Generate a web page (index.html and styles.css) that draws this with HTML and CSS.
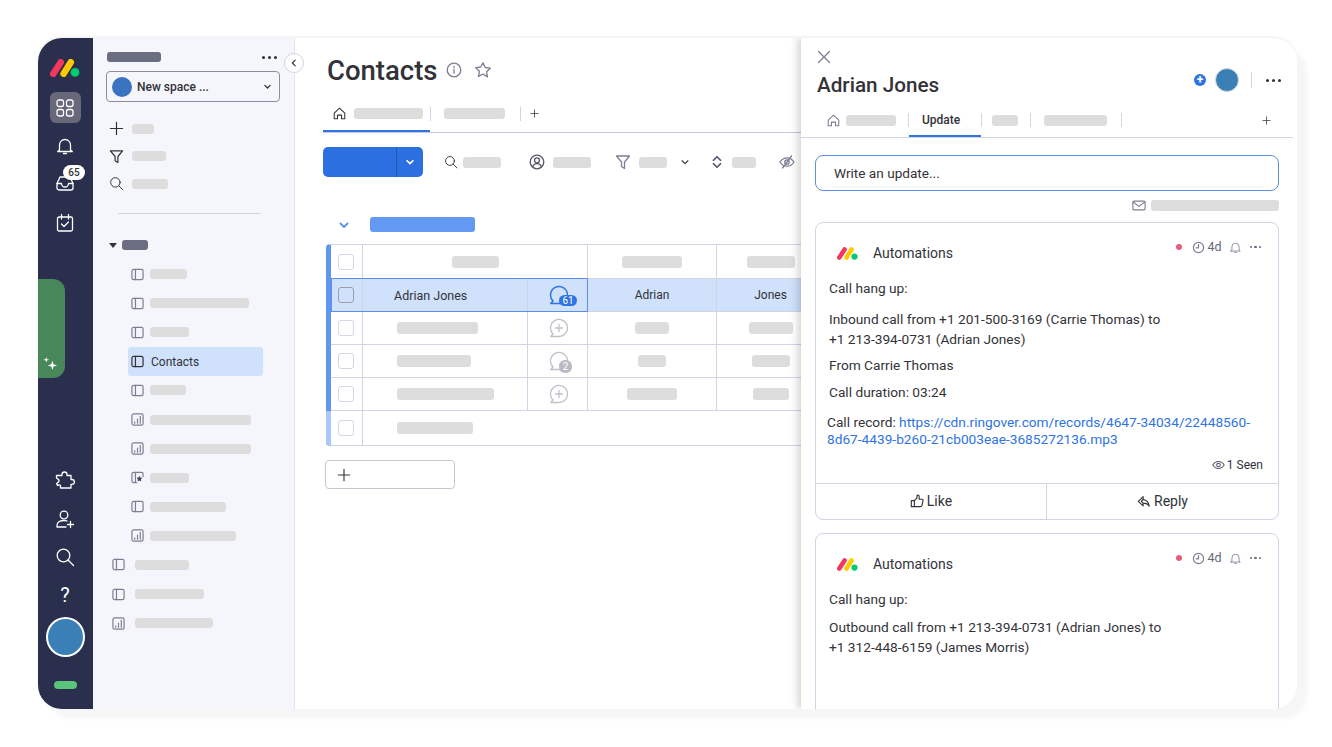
FILE: index.html
```html
<!DOCTYPE html>
<html lang="en">
<head>
	<meta charset="utf-8">
	<title>Contacts</title>
	<link rel="stylesheet" href="styles.css">
</head>
<body>
<svg class="defs" width="0" height="0">
	<symbol id="i-logo" viewBox="0 0 30 18">
		<path d="M3.300 14.800L10.800 3.200" stroke="#f3375f" stroke-width="6.500" stroke-linecap="round" fill="none"/>
		<path d="M13.600 14.800L20.800 3.200" stroke="#ffcb00" stroke-width="6.500" stroke-linecap="round" fill="none"/>
		<circle cx="25" cy="13.400" r="4.400" fill="#00ca72"/>
	</symbol>
	<symbol id="i-apps" viewBox="0 0 20 20">
		<rect x="2" y="2" width="6.500" height="6.500" rx="2"/><rect x="11.500" y="2" width="6.500" height="6.500" rx="2"/>
		<rect x="2" y="11.500" width="6.500" height="6.500" rx="2"/><rect x="11.500" y="11.500" width="6.500" height="6.500" rx="2"/>
	</symbol>
	<symbol id="i-bell" viewBox="0 0 20 20">
		<path d="M4.500 14V9a5.500 5.500 0 0 1 11 0v5l1.800 1.500H2.700z"/><path d="M8.500 17.500h3"/>
	</symbol>
	<symbol id="i-inbox" viewBox="0 0 20 20">
		<path d="M5 4h10l3 6.500V15a2 2 0 0 1-2 2H4a2 2 0 0 1-2-2v-4.500z"/><path d="M2 10.500h4.500a3.500 3.500 0 0 0 7 0H18"/>
	</symbol>
	<symbol id="i-cal" viewBox="0 0 20 20">
		<rect x="2.500" y="4" width="15" height="14" rx="1.500"/><path d="M6.500 1.500V6M13.500 1.500V6M6.500 11l2.500 2.500 4.500-4.500"/>
	</symbol>
	<symbol id="i-puzzle" viewBox="0 0 20 20">
		<path d="M7 5.500V4.500a2.500 2.500 0 0 1 5 0v1h4v4h1a2.300 2.300 0 0 1 0 4.800h-1V18H5.500v-2.500a2 2 0 0 0-3 0L1.500 13.500l2-1.500a2 2 0 0 0 0-2.500l-2-1.500V5.500z"/>
	</symbol>
	<symbol id="i-invite" viewBox="0 0 20 20">
		<circle cx="9" cy="6" r="3.800"/><path d="M2 18v-1.500c0-3 3-5 7-5 1 0 2 .1 3 .5M2 18h9M15.500 12.500v6M12.500 15.500h6"/>
	</symbol>
	<symbol id="i-search" viewBox="0 0 20 20">
		<circle cx="8.500" cy="8.500" r="6.300"/><path d="M13 13l5.500 5.500"/>
	</symbol>
	<symbol id="i-plus" viewBox="0 0 16 16"><path d="M8 1.500v13M1.500 8h13"/></symbol>
	<symbol id="i-filter" viewBox="0 0 16 16"><path d="M1.500 2h13L9.500 8v6.500L6.500 12.500V8z"/></symbol>
	<symbol id="i-board" viewBox="0 0 14 14"><rect x="1" y="1.500" width="12" height="11" rx="1.800"/><path d="M4.800 1.500v11"/></symbol>
	<symbol id="i-chart" viewBox="0 0 14 14"><rect x="1" y="1" width="12" height="12" rx="1.800"/><path d="M4 11V9.500M7 11V6.500M10 11V3.500"/></symbol>
	<symbol id="i-wand" viewBox="0 0 14 14"><path d="M6 12.500H2.800a1.800 1.800 0 0 1-1.800-1.800V3.300a1.800 1.800 0 0 1 1.800-1.800h8.400A1.800 1.800 0 0 1 13 3.300V6M4.800 1.500v11"/><path d="M9 5l1 2 2.300.3-1.600 1.600.4 2.300-2.100-1-2 1 .4-2.300L6 7.300 8.200 7z" fill="#44465a" stroke="none"/></symbol>
	<symbol id="i-home" viewBox="0 0 16 16"><path d="M1.500 7.500L8 1.500l6.500 6v7h-4V10h-5v4.500h-4z"/></symbol>
	<symbol id="i-chev" viewBox="0 0 12 12"><path d="M2.500 4.500L6 8l3.500-3.500"/></symbol>
	<symbol id="i-star" viewBox="0 0 18 18"><path d="M9 1.800l2.200 4.700 5.100.7-3.700 3.600.9 5.100L9 13l-4.500 2.400.9-5.100-3.700-3.600 5.100-.7z"/></symbol>
	<symbol id="i-info" viewBox="0 0 16 16"><circle cx="8" cy="8" r="6.800"/><path d="M8 7.300v4M8 4.500v1.200"/></symbol>
	<symbol id="i-person" viewBox="0 0 16 16"><circle cx="8" cy="8" r="6.800"/><circle cx="8" cy="6.300" r="2.500"/><path d="M3.500 13c.6-2.200 2.300-3.400 4.500-3.400s3.900 1.200 4.500 3.400"/></symbol>
	<symbol id="i-sort" viewBox="0 0 12 16"><path d="M2 6l4-4 4 4M2 10l4 4 4-4" stroke-width="2"/></symbol>
	<symbol id="i-eyeoff" viewBox="0 0 16 16"><path d="M1 8c1.800-2.800 4.200-4.200 7-4.200s5.200 1.400 7 4.200c-1.800 2.800-4.200 4.200-7 4.200S2.800 10.800 1 8z"/><circle cx="8" cy="8" r="2.200"/><path d="M12.500 2L3.500 14"/></symbol>
	<symbol id="i-eye" viewBox="0 0 16 12"><path d="M1 6c1.800-2.800 4.200-4.200 7-4.200s5.200 1.400 7 4.200c-1.800 2.800-4.200 4.200-7 4.200S2.800 8.800 1 6z"/><circle cx="8" cy="6" r="2.200"/></symbol>
	<symbol id="i-bubble" viewBox="0 0 20 20"><path d="M11 18.500A8.500 8.500 0 1 0 5 16l-2.200 2.500z"/></symbol>
	<symbol id="i-bubbleplus" viewBox="0 0 20 20"><path d="M11 18.500A8.500 8.500 0 1 0 5 16l-2.200 2.500z"/><path d="M11 6.500v7M7.500 10h7"/></symbol>
	<symbol id="i-close" viewBox="0 0 14 14"><path d="M1.500 1.500l11 11M12.500 1.500l-11 11"/></symbol>
	<symbol id="i-mail" viewBox="0 0 16 12"><rect x="1" y="1" width="14" height="10" rx="1.500"/><path d="M1.500 2l6.500 5 6.500-5"/></symbol>
	<symbol id="i-clock" viewBox="0 0 14 14"><circle cx="7" cy="7" r="5.500"/><path d="M7 3.800V7.300H4.500"/></symbol>
	<symbol id="i-thumb" viewBox="0 0 16 16"><path d="M5 7.500h-3.500v7H5zM5 7.500l3-3V2.300c0-1.500 2.500-1.300 2.500.7v3h3c1 0 1.600.8 1.400 1.700l-1.200 5.400c-.2.800-.7 1.300-1.500 1.300H5"/></symbol>
	<symbol id="i-reply" viewBox="0 0 16 16"><path d="M7 3L1.500 8.500 7 13.500v-3c3 0 5.500 1 7 3.500-.5-4-3-7-7-7.500zM7 5.800L5 8.500l2 2"/></symbol>
	<symbol id="i-spark" viewBox="0 0 16 16"><path d="M10 5l1.200 3.800L15 10l-3.800 1.200L10 15l-1.200-3.800L5 10l3.800-1.200zM3.500 1l.7 2.300 2.300.7-2.300.7L3.500 7l-.7-2.300L.5 4l2.300-.7z" fill="#fff" stroke="none"/></symbol>
</svg>

<div class="app">
	<nav class="rail">
		<svg class="rail-logo"><use href="#i-logo"/></svg>
		<div class="rail-apps"><svg class="ic20 white"><use href="#i-apps"/></svg></div>
		<svg class="ic20 white bell-ic"><use href="#i-bell"/></svg>
		<div class="inbox-ic">
			<svg class="ic20 white"><use href="#i-inbox"/></svg>
			<span class="rail-badge">65</span>
		</div>
		<svg class="ic20 white cal-ic"><use href="#i-cal"/></svg>
		<div class="rail-green"><svg class="spark"><use href="#i-spark"/></svg></div>
		<svg class="ic20 white puzzle-ic"><use href="#i-puzzle"/></svg>
		<svg class="ic20 white invite-ic"><use href="#i-invite"/></svg>
		<svg class="ic20 white search-ic"><use href="#i-search"/></svg>
		<div class="help-ic">?</div>
		<div class="rail-avatar"></div>
		<div class="rail-pill"></div>
	</nav>

	<aside class="sidebar">
		<button class="collapse"><svg class="ic10 dark"><use href="#i-chev"/></svg></button>
		<div class="side-head">
			<span class="sk dk w54 h10"></span>
			<span class="dots"><i></i><i></i><i></i></span>
		</div>
		<div class="space-drop">
			<span class="space-dot"></span>
			<span class="space-name">New space ...</span>
			<svg class="ic10 dark chev-thick"><use href="#i-chev"/></svg>
		</div>
		<div class="tools">
			<div class="tool"><svg class="ic15 dark"><use href="#i-plus"/></svg><span class="sk w22 h10"></span></div>
			<div class="tool"><svg class="ic15 dark"><use href="#i-filter"/></svg><span class="sk w34 h10"></span></div>
			<div class="tool"><svg class="ic15 dark"><use href="#i-search"/></svg><span class="sk w36 h10"></span></div>
		</div>
		<div class="side-line"></div>
		<div class="side-group">
			<span class="caret"></span>
			<span class="sk dk w26 h10"></span>
		</div>
		<div class="side-list">
			<div class="side-item"><svg class="ic13 grey"><use href="#i-board"/></svg><span class="sk w37 h10"></span></div>
			<div class="side-item"><svg class="ic13 grey"><use href="#i-board"/></svg><span class="sk w99 h10"></span></div>
			<div class="side-item"><svg class="ic13 grey"><use href="#i-board"/></svg><span class="sk w39 h10"></span></div>
			<div class="side-item active"><svg class="ic13 dark"><use href="#i-board"/></svg><span class="active-txt">Contacts</span></div>
			<div class="side-item"><svg class="ic13 grey"><use href="#i-board"/></svg><span class="sk w36 h10"></span></div>
			<div class="side-item"><svg class="ic13 grey"><use href="#i-chart"/></svg><span class="sk w101 h10"></span></div>
			<div class="side-item"><svg class="ic13 grey"><use href="#i-chart"/></svg><span class="sk w101 h10"></span></div>
			<div class="side-item"><svg class="ic13 grey"><use href="#i-wand"/></svg><span class="sk w39 h10"></span></div>
			<div class="side-item"><svg class="ic13 grey"><use href="#i-board"/></svg><span class="sk w76 h10"></span></div>
			<div class="side-item"><svg class="ic13 grey"><use href="#i-chart"/></svg><span class="sk w86 h10"></span></div>
			<div class="side-item outer"><svg class="ic13 grey"><use href="#i-board"/></svg><span class="sk w54 h10"></span></div>
			<div class="side-item outer"><svg class="ic13 grey"><use href="#i-board"/></svg><span class="sk w69 h10"></span></div>
			<div class="side-item outer"><svg class="ic13 grey"><use href="#i-chart"/></svg><span class="sk w78 h10"></span></div>
		</div>
	</aside>

	<main class="main">
		<div class="title-row">
			<h1>Contacts</h1>
			<svg class="ic16 grey info-ic"><use href="#i-info"/></svg>
			<svg class="ic18 grey star-ic"><use href="#i-star"/></svg>
		</div>
		<div class="main-tabs">
			<div class="main-tab on"><svg class="ic13 dark"><use href="#i-home"/></svg><span class="sk w69 h11"></span></div>
			<span class="tab-sep"></span>
			<span class="sk w61 h11 tab2"></span>
			<span class="tab-sep sep2"></span>
			<svg class="ic9 dark tab-plus"><use href="#i-plus"/></svg>
		</div>
		<div class="toolbar">
			<div class="new-btn"><span class="new-main"></span><span class="new-arrow"><svg class="ic10 white thick"><use href="#i-chev"/></svg></span></div>
			<div class="tb-item search-tb"><svg class="ic14 dark"><use href="#i-search"/></svg><span class="sk w38 h11"></span></div>
			<div class="tb-item person-tb"><svg class="ic16 dark2"><use href="#i-person"/></svg><span class="sk w38 h11"></span></div>
			<div class="tb-item filter-tb"><svg class="ic16 grey"><use href="#i-filter"/></svg><span class="sk w28 h11"></span><svg class="ic10 dark chev-tb"><use href="#i-chev"/></svg></div>
			<div class="tb-item sort-tb"><svg class="ic14 dark2"><use href="#i-sort"/></svg><span class="sk w24 h11"></span></div>
			<div class="tb-item eye-tb"><svg class="ic16 grey"><use href="#i-eyeoff"/></svg></div>
		</div>
		<div class="group-head">
			<svg class="ic12 lblue thick"><use href="#i-chev"/></svg>
			<span class="sk bl w105 h15"></span>
		</div>

		<div class="table">
			<div class="row head">
				<div class="cell check"><span class="box"></span></div>
				<div class="cell wide"><span class="sk w47 h12"></span></div>
				<div class="cell"><span class="sk w60 h12"></span></div>
				<div class="cell"><span class="sk w48 h12"></span></div>
			</div>
			<div class="row sel">
				<div class="cell check"><span class="box"></span></div>
				<div class="cell name name-txt">Adrian Jones</div>
				<div class="cell chat"><svg class="ic20 blue"><use href="#i-bubble"/></svg><span class="chat-count">61</span></div>
				<div class="cell">Adrian</div>
				<div class="cell">Jones</div>
				<span class="sel-frame"></span>
			</div>
			<div class="row">
				<div class="cell check"><span class="box"></span></div>
				<div class="cell name"><span class="sk w81 h12"></span></div>
				<div class="cell chat"><svg class="ic20 lgrey"><use href="#i-bubbleplus"/></svg></div>
				<div class="cell"><span class="sk w34 h12"></span></div>
				<div class="cell"><span class="sk w44 h12"></span></div>
			</div>
			<div class="row">
				<div class="cell check"><span class="box"></span></div>
				<div class="cell name"><span class="sk w74 h12"></span></div>
				<div class="cell chat"><svg class="ic20 lgrey"><use href="#i-bubble"/></svg><span class="chat-count grey-count">2</span></div>
				<div class="cell"><span class="sk w28 h12"></span></div>
				<div class="cell"><span class="sk w38 h12"></span></div>
			</div>
			<div class="row">
				<div class="cell check"><span class="box"></span></div>
				<div class="cell name"><span class="sk w97 h12"></span></div>
				<div class="cell chat"><svg class="ic20 lgrey"><use href="#i-bubbleplus"/></svg></div>
				<div class="cell"><span class="sk w50 h12"></span></div>
				<div class="cell"><span class="sk w36 h12"></span></div>
			</div>
			<div class="row last">
				<div class="cell check"><span class="box"></span></div>
				<div class="cell name plain"><span class="sk w76 h12"></span></div>
			</div>
		</div>
		<div class="add-row"><svg class="ic14 dark"><use href="#i-plus"/></svg></div>
	</main>

	<section class="panel">
		<svg class="ic14 grey close-ic"><use href="#i-close"/></svg>
		<div class="panel-title">
			<h2>Adrian Jones</h2>
			<div class="panel-actions">
				<span class="add-sub"></span>
				<span class="sub-avatar"></span>
				<span class="tab-sep act-sep"></span>
				<span class="dots big"><i></i><i></i><i></i></span>
			</div>
		</div>
		<div class="panel-tabs">
			<svg class="ic13 grey"><use href="#i-home"/></svg>
			<span class="sk w50 h11 p-sk1"></span>
			<span class="tab-sep"></span>
			<span class="panel-tab">Update</span>
			<span class="tab-sep"></span>
			<span class="sk w26 h11 p-sk2"></span>
			<span class="tab-sep"></span>
			<span class="sk w63 h11 p-sk3"></span>
			<span class="tab-sep"></span>
			<svg class="ic9 dark p-plus"><use href="#i-plus"/></svg>
		</div>
		<div class="write-box">Write an update...</div>
		<div class="mail-row"><svg class="mail-ic grey"><use href="#i-mail"/></svg><span class="sk w128 h11"></span></div>

		<article class="card">
			<div class="card-head">
				<svg class="card-logo"><use href="#i-logo"/></svg>
				<span>Automations</span>
				<div class="card-meta">
					<span class="red-dot"></span>
					<svg class="ic13 grey"><use href="#i-clock"/></svg><span class="ago">4d</span>
					<svg class="ic13 grey meta-bell"><use href="#i-bell"/></svg>
					<span class="dots small"><i></i><i></i><i></i></span>
				</div>
			</div>
			<p class="first">Call hang up:</p>
			<p class="gap11">Inbound call from +1 201-500-3169 (Carrie Thomas) to<br>+1 213-394-0731 (Adrian Jones)</p>
			<p class="gap6">From Carrie Thomas</p>
			<p class="gap7">Call duration: 03:24</p>
			<p class="record">Call record: <a href="#">https://cdn.ringover.com/records/4647-34034/22448560-</a><br><a href="#">8d67-4439-b260-21cb003eae-3685272136.mp3</a></p>
			<div class="seen"><svg class="seen-ic dark2"><use href="#i-eye"/></svg>1 Seen</div>
			<div class="card-foot">
				<div class="foot-btn"><svg class="ic14 dark"><use href="#i-thumb"/></svg>Like</div>
				<div class="foot-btn"><svg class="ic14 dark"><use href="#i-reply"/></svg>Reply</div>
			</div>
		</article>

		<article class="card second">
			<div class="card-head">
				<svg class="card-logo"><use href="#i-logo"/></svg>
				<span>Automations</span>
				<div class="card-meta">
					<span class="red-dot"></span>
					<svg class="ic13 grey"><use href="#i-clock"/></svg><span class="ago">4d</span>
					<svg class="ic13 grey meta-bell"><use href="#i-bell"/></svg>
					<span class="dots small"><i></i><i></i><i></i></span>
				</div>
			</div>
			<p class="first">Call hang up:</p>
			<p class="gap8">Outbound call from +1 213-394-0731 (Adrian Jones) to<br>+1 312-448-6159 (James Morris)</p>
		</article>
	</section>
</div>
</body>
</html>
```

FILE: styles.css
```css
* {
	margin: 0;
	padding: 0;
	box-sizing: border-box;
}

body {
	background: #fff;
	padding: 38px;
	font-family: Roboto, "Liberation Sans", sans-serif;
	font-size: 14px;
	color: #323338;
}

.defs {
	position: absolute;
}

.app {
	display: flex;
	width: 1259px;
	height: 671px;
	border-radius: 24px;
	overflow: hidden;
	background: #fff;
	box-shadow: 10px 10px 5px #f6f6f7, 0 -2px 2px #f4f4f6;
}

/* icon sizes */
svg {
	display: block;
	flex: none;
	fill: none;
	stroke-width: 1.3;
	stroke-linejoin: round;
	stroke-linecap: round;
}
.ic9 { width: 9px; height: 9px; }
.ic10 { width: 10px; height: 10px; }
.ic12 { width: 12px; height: 12px; }
.ic13 { width: 13px; height: 13px; }
.ic14 { width: 14px; height: 14px; }
.ic15 { width: 15px; height: 15px; }
.ic16 { width: 16px; height: 16px; }
.ic18 { width: 18px; height: 18px; }
.ic20 { width: 20px; height: 20px; }
.white { stroke: #fff; }
.dark { stroke: #323338; }
.dark2 { stroke: #555769; }
.grey { stroke: #7c7f93; }
.lgrey { stroke: #c0c1cc; }
.blue { stroke: #2f74e0; }
.lblue { stroke: #5f97f0; }
.thick { stroke-width: 2; }

/* skeleton bars */
.sk {
	display: block;
	flex: none;
	background: #ddd;
	border-radius: 3px;
}
.sk.dk { background: #6b6d80; }
.sk.bl { background: #6399f2; }
.h10 { height: 10px; }
.h11 { height: 11px; }
.h12 { height: 12px; }
.h15 { height: 15px; }
.w22 { width: 22px; }
.w24 { width: 24px; }
.w26 { width: 26px; }
.w28 { width: 28px; }
.w34 { width: 34px; }
.w36 { width: 36px; }
.w37 { width: 37px; }
.w38 { width: 38px; }
.w39 { width: 39px; }
.w44 { width: 44px; }
.w47 { width: 47px; }
.w48 { width: 48px; }
.w50 { width: 50px; }
.w54 { width: 54px; }
.w60 { width: 60px; }
.w61 { width: 61px; }
.w63 { width: 63px; }
.w69 { width: 69px; }
.w74 { width: 74px; }
.w76 { width: 76px; }
.w78 { width: 78px; }
.w81 { width: 81px; }
.w86 { width: 86px; }
.w97 { width: 97px; }
.w99 { width: 99px; }
.w101 { width: 101px; }
.w105 { width: 105px; }
.w128 { width: 128px; }

.dots {
	display: flex;
	gap: 3px;
}
.dots i {
	width: 3px;
	height: 3px;
	border-radius: 50%;
	background: #323338;
}
.dots.small { gap: 2px; }
.dots.small i { background: #676879; width: 2.500px; height: 2.500px; }

/* left rail */
.rail {
	width: 55px;
	flex: none;
	display: flex;
	flex-direction: column;
	align-items: center;
	background: #292f4c;
	padding: 21px 1px 0 0;
}
.rail-logo { width: 30px; height: 18px; }
.rail-apps {
	margin-top: 15px;
	width: 31px;
	height: 31px;
	border-radius: 6px;
	background: #676879;
	display: flex;
	align-items: center;
	justify-content: center;
}
.bell-ic { margin-top: 13px; }
.inbox-ic { margin-top: 17px; position: relative; }
.cal-ic { margin-top: 20px; }
.rail-badge {
	position: absolute;
	left: 8px;
	top: -8px;
	width: 22px;
	height: 15px;
	border-radius: 8px;
	background: #fff;
	color: #323338;
	font-size: 10px;
	font-weight: 500;
	line-height: 15px;
	text-align: center;
}
.rail-green {
	align-self: flex-start;
	margin-top: 46px;
	width: 27px;
	height: 99px;
	border-radius: 0 12px 12px 0;
	background: #47875a;
	display: flex;
	align-items: flex-end;
	padding: 0 0 7px 5px;
}
.spark { width: 15px; height: 15px; }
.puzzle-ic { margin-top: 92px; }
.invite-ic { margin-top: 19px; }
.search-ic { margin-top: 18px; }
.help-ic {
	margin-top: 18px;
	height: 20px;
	color: #fff;
	font-size: 20px;
	line-height: 20px;
}
.rail-avatar {
	margin-top: 12px;
	width: 39px;
	height: 40px;
	border-radius: 50%;
	background: #3a7fb5;
	border: 2px solid #fff;
}
.rail-pill {
	margin-top: 24px;
	width: 23px;
	height: 8px;
	border-radius: 4px;
	background: #5ac47a;
}

/* sidebar */
.sidebar {
	width: 202px;
	flex: none;
	position: relative;
	background: #f5f6fb;
	border-right: 1px solid #e1e3ee;
	padding-top: 10px;
}
.collapse {
	position: absolute;
	right: -10px;
	top: 15px;
	width: 20px;
	height: 20px;
	border-radius: 50%;
	border: 1px solid #d0d4e4;
	background: #fff;
	display: flex;
	align-items: center;
	justify-content: center;
	z-index: 2;
}
.collapse svg { transform: rotate(90deg); }
.side-head {
	height: 18px;
	display: flex;
	align-items: center;
	justify-content: space-between;
	padding: 0 17px 0 14px;
}
.space-drop {
	margin: 5px 14px 0 13px;
	height: 31px;
	display: flex;
	align-items: center;
	border: 1px solid #8b8c9e;
	border-radius: 4px;
	padding: 0 7px 0 5px;
	font-size: 12px;
	font-weight: 500;
}
.space-dot {
	width: 20px;
	height: 20px;
	border-radius: 50%;
	background: #3a74c0;
	margin-right: 5px;
}
.space-name { flex: 1; }
.chev-thick { stroke-width: 1.800; width: 9px; height: 9px; }
.tools { margin-top: 13px; }
.tool {
	height: 27.500px;
	display: flex;
	align-items: center;
	gap: 8px;
	padding-left: 17px;
}
.tool svg { margin-left: -1px; }
.side-line {
	margin: 15.500px 0 0 25px;
	width: 142px;
	height: 1px;
	background: #cfd1dc;
}
.side-group {
	margin-top: 21px;
	height: 20px;
	display: flex;
	align-items: center;
	gap: 5px;
	padding-left: 16px;
}
.caret {
	border-top: 5px solid #323338;
	border-left: 4.500px solid transparent;
	border-right: 4.500px solid transparent;
}
.side-list { margin-top: 4.500px; }
.side-item {
	height: 29.100px;
	display: flex;
	align-items: center;
	gap: 6px;
	margin-left: 35px;
	padding-left: 3px;
	font-size: 12px;
}
.side-item.active {
	width: 135px;
	background: #cfe1fb;
	border-radius: 3px;
}
.active-txt {
	margin: 1px 0 0 1px;
}
.side-item.outer {
	margin-left: 19px;
	padding-left: 0;
	gap: 10px;
}

/* main board */
.main {
	flex: 1;
	min-width: 0;
	overflow: hidden;
	padding: 14px 0 0 28px;
}
.title-row {
	height: 36px;
	display: flex;
	align-items: center;
	padding-left: 4px;
}
h1 {
	font-size: 27.500px;
	font-weight: 500;
	line-height: 36px;
	padding-top: 1px;
}
.info-ic { margin-left: 8px; }
.star-ic { margin-left: 12px; }
.main-tabs {
	margin-top: 12px;
	height: 33px;
	display: flex;
	align-items: center;
	padding-bottom: 5px;
	border-bottom: 1px solid #c5c7e0;
}
.main-tab {
	width: 107px;
	height: 32px;
	margin-bottom: -5px;
	display: flex;
	align-items: center;
	gap: 8px;
	padding: 0 0 3px 10px;
	border-bottom: 2px solid #2f74e0;
}
.tab-sep {
	width: 1px;
	height: 14px;
	flex: none;
	background: #d0d4e4;
}
.tab2 { margin: 0 0 1px 13px; }
.sep2 { margin-left: 15px; }
.tab-plus { margin-left: 9px; }
.toolbar {
	margin-top: 14px;
	height: 30px;
	display: flex;
	align-items: center;
}
.new-btn {
	width: 100px;
	height: 30px;
	display: flex;
	border-radius: 5px;
	overflow: hidden;
	background: #2b6fe0;
}
.new-main { width: 74px; border-right: 1px solid #1e57b4; }
.new-arrow {
	flex: 1;
	display: flex;
	align-items: center;
	justify-content: center;
}
.tb-item {
	display: flex;
	align-items: center;
	gap: 5px;
}
.search-tb { margin-left: 21px; }
.person-tb { margin-left: 28px; gap: 8px; }
.filter-tb { margin-left: 24px; gap: 8px; }
.chev-tb { margin-left: 5px; }
.sort-tb { margin-left: 20px; gap: 8px; }
.eye-tb { margin-left: 23px; }
.group-head {
	margin-top: 40px;
	height: 15px;
	display: flex;
	align-items: center;
	padding-left: 15px;
	gap: 20px;
}

/* table */
.table {
	position: relative;
	margin: 12px 0 0 3px;
	width: 640px;
	border: 1px solid #d0d4e4;
	border-left: 5px solid #5f97f0;
	border-radius: 4px 0 0 4px;
	background: #fff;
}
.row {
	position: relative;
	height: 33px;
	display: grid;
	grid-template-columns: 32px 165px 60px 129px 108px;
	border-bottom: 1px solid #d0d4e4;
}
.row.head { height: 34px; }
.row.last { height: 34px; border-bottom: 0; }
.row.last::before {
	content: "";
	position: absolute;
	left: -5px;
	top: 0;
	bottom: -1px;
	width: 5px;
	background: #a9c8f7;
	border-radius: 0 0 0 4px;
}
.row.sel { background: #cfe1fb; }
.cell {
	display: flex;
	align-items: center;
	justify-content: center;
	border-right: 1px solid #d0d4e4;
	font-size: 12px;
}
.row.head .wide { grid-column: span 2; }
.name { padding-left: 34px; justify-content: flex-start; }
.name-txt { padding-left: 31px; font-size: 12.500px; }
.plain { border-right: 0; }
.check { padding-right: 1px; }
.box {
	width: 16px;
	height: 16px;
	border: 1px solid #d5d7e4;
	border-radius: 3px;
	background: #fff;
}
.sel .box {
	background: transparent;
	border-color: #9b9da9;
}
.chat { position: relative; }
.sel .chat svg { stroke-width: 1.500; }
.chat-count {
	position: absolute;
	left: 31px;
	top: 16px;
	min-width: 18px;
	height: 11px;
	border-radius: 6px;
	background: #2f74e0;
	color: #fff;
	font-size: 10px;
	line-height: 11px;
	text-align: center;
}
.grey-count {
	left: 31px;
	top: 15px;
	min-width: 13px;
	height: 13px;
	line-height: 13px;
	background: #b9bac6;
}
.sel-frame {
	position: absolute;
	left: 0;
	top: -1px;
	width: 257px;
	bottom: -1px;
	border: 1px solid #5a90e8;
}
.add-row {
	margin: 14px 0 0 2px;
	width: 130px;
	height: 29px;
	border: 1px solid #c5c7d0;
	border-radius: 4px;
	display: flex;
	align-items: center;
	padding-left: 11px;
}

/* update panel */
.panel {
	width: 496px;
	flex: none;
	position: relative;
	overflow: hidden;
	background: #fff;
	box-shadow: -3px 0 8px rgba(0, 0, 0, .18);
	padding-top: 12px;
	clip-path: inset(0 0 0 -12px);
}
.close-ic { margin-left: 16px; }
.panel-title {
	margin-top: 5px;
	display: flex;
	justify-content: space-between;
	padding: 0 16px;
}
h2 {
	font-size: 20.700px;
	font-weight: 500;
	line-height: 32px;
}
.panel-actions {
	height: 22px;
	display: flex;
	align-items: center;
}
.add-sub {
	width: 12px;
	height: 12px;
	border-radius: 50%;
	background: #2f74e0;
	position: relative;
}
.add-sub::after {
	content: "+";
	position: absolute;
	inset: 0;
	color: #fff;
	font-size: 12px;
	font-weight: 700;
	line-height: 12px;
	text-align: center;
}
.sub-avatar {
	margin-left: 9px;
	width: 24px;
	height: 24px;
	border-radius: 50%;
	background: #3a7fb5;
	border: 1px solid #ddd;
}
.act-sep { margin: 0 14px 0 12px; height: 16px; }
.panel-tabs {
	margin: 2px 4px 0 0;
	height: 35px;
	display: flex;
	align-items: center;
	padding-left: 26px;
	border-bottom: 1px solid #d0d4e4;
}
.p-sk1 { margin: 0 12px 0 6px; }
.p-sk2 { margin: 0 12px 0 10px; }
.p-sk3 { margin: 0 14px 0 13px; }
.panel-tab {
	width: 72px;
	height: 34px;
	line-height: 34px;
	padding-right: 8px;
	text-align: center;
	font-size: 12px;
	font-weight: 500;
	border-bottom: 2px solid #2f74e0;
}
.p-plus { margin-left: auto; margin-right: 22px; }
.write-box {
	margin: 17px 18px 0 14px;
	height: 36px;
	border: 1px solid #5a90e8;
	border-radius: 8px;
	padding-left: 18px;
	line-height: 34px;
	font-size: 13.600px;
}
.mail-row {
	margin: 9px 18px 0 0;
	height: 11px;
	display: flex;
	justify-content: flex-end;
	align-items: center;
	gap: 5px;
}
.mail-ic { width: 14px; height: 11px; }

/* update cards */
.card {
	margin: 11px 18px 0 14px;
	height: 298px;
	display: flex;
	flex-direction: column;
	border: 1px solid #d0d4e4;
	border-radius: 8px;
	padding: 20px 0 0 13px;
}
.card.second {
	margin-top: 13px;
	height: 300px;
}
.card-head {
	height: 20px;
	display: flex;
	align-items: center;
	line-height: 20px;
}
.card-logo {
	width: 21px;
	height: 13px;
	margin: 0 15px 0 8px;
}
.card-meta {
	margin: -12px 0 0 auto;
	padding-right: 17px;
	display: flex;
	align-items: center;
	font-size: 12.500px;
	color: #676879;
}
.red-dot {
	width: 6px;
	height: 6px;
	border-radius: 50%;
	background: #ea5c7c;
	margin-right: 10px;
}
.ago { margin-left: 2px; }
.meta-bell { margin: 0 8px 0 7px; }
p {
	line-height: 20px;
	font-size: 13.700px;
}
.first { margin-top: 15px; }
.gap11 { margin-top: 11px; }
.gap6 { margin-top: 6px; }
.gap7 { margin-top: 7px; }
.gap8 { margin-top: 8px; }
.record {
	margin: 11.500px 15px 0 -2px;
	line-height: 17px;
}
.record a {
	color: #2f74e0;
	text-decoration: none;
}
.seen {
	margin-top: 9.500px;
	padding-right: 15px;
	display: flex;
	justify-content: flex-end;
	align-items: center;
	gap: 2px;
	font-size: 12px;
	line-height: 16px;
}
.seen-ic { width: 13px; height: 10px; }
.card-foot {
	margin: auto 0 0 -13px;
	height: 36px;
	display: flex;
	border-top: 1px solid #d0d4e4;
}
.foot-btn {
	flex: 1;
	display: flex;
	align-items: center;
	justify-content: center;
	gap: 3px;
	padding-bottom: 2px;
}
.foot-btn:first-child {
	flex: none;
	width: 230px;
}
.foot-btn + .foot-btn {
	border-left: 1px solid #d0d4e4;
}
```
